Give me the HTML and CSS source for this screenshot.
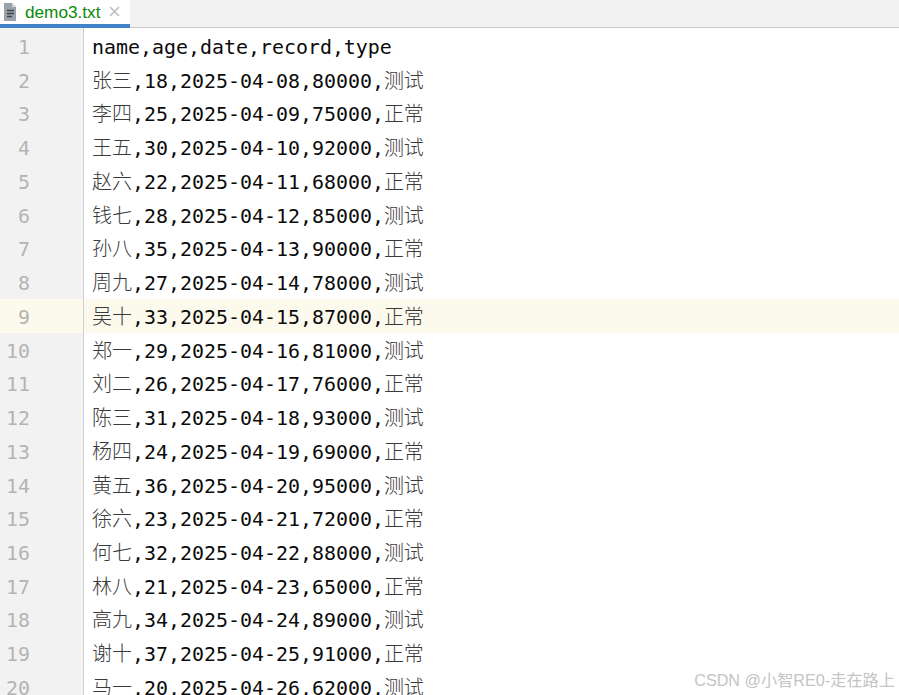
FILE: index.html
```html
<!DOCTYPE html>
<html lang="zh">
<head>
<meta charset="utf-8">
<title>demo3.txt</title>
<link rel="stylesheet" href="styles.css">
</head>
<body>
<div class="tabbar">
  <div class="tab">
    <svg class="file-icon" width="16" height="20" viewBox="0 0 16 20"><path d="M2 1h8l4 4v14H2z" fill="#9aa3ab"/><path d="M10 1l4 4h-4z" fill="#d3d7da"/><path d="M5 8.500h7M5 11.500h7M5 14.500h5" stroke="#3c4347" stroke-width="1.400"/></svg>
    <span class="tab-name">demo3.txt</span>
    <svg class="close-icon" width="11" height="11" viewBox="0 0 11 11"><path d="M1 1l9 9M10 1l-9 9" stroke="#b9bec3" stroke-width="1.500"/></svg>
  </div>
</div>
<div class="editor">
  <div class="gutter">
    <div class="num">1</div><div class="num">2</div><div class="num">3</div><div class="num">4</div><div class="num">5</div><div class="num">6</div><div class="num">7</div><div class="num">8</div><div class="num cur">9</div><div class="num">10</div><div class="num">11</div><div class="num">12</div><div class="num">13</div><div class="num">14</div><div class="num">15</div><div class="num">16</div><div class="num">17</div><div class="num">18</div><div class="num">19</div><div class="num">20</div>
  </div>
  <div class="code">
    <div class="line">name,age,date,record,type</div>
    <div class="line"><span class="zh">张三</span>,18,2025-04-08,80000,<span class="zh">测试</span></div>
    <div class="line"><span class="zh">李四</span>,25,2025-04-09,75000,<span class="zh">正常</span></div>
    <div class="line"><span class="zh">王五</span>,30,2025-04-10,92000,<span class="zh">测试</span></div>
    <div class="line"><span class="zh">赵六</span>,22,2025-04-11,68000,<span class="zh">正常</span></div>
    <div class="line"><span class="zh">钱七</span>,28,2025-04-12,85000,<span class="zh">测试</span></div>
    <div class="line"><span class="zh">孙八</span>,35,2025-04-13,90000,<span class="zh">正常</span></div>
    <div class="line"><span class="zh">周九</span>,27,2025-04-14,78000,<span class="zh">测试</span></div>
    <div class="line cur"><span class="zh">吴十</span>,33,2025-04-15,87000,<span class="zh">正常</span></div>
    <div class="line"><span class="zh">郑一</span>,29,2025-04-16,81000,<span class="zh">测试</span></div>
    <div class="line"><span class="zh">刘二</span>,26,2025-04-17,76000,<span class="zh">正常</span></div>
    <div class="line"><span class="zh">陈三</span>,31,2025-04-18,93000,<span class="zh">测试</span></div>
    <div class="line"><span class="zh">杨四</span>,24,2025-04-19,69000,<span class="zh">正常</span></div>
    <div class="line"><span class="zh">黄五</span>,36,2025-04-20,95000,<span class="zh">测试</span></div>
    <div class="line"><span class="zh">徐六</span>,23,2025-04-21,72000,<span class="zh">正常</span></div>
    <div class="line"><span class="zh">何七</span>,32,2025-04-22,88000,<span class="zh">测试</span></div>
    <div class="line"><span class="zh">林八</span>,21,2025-04-23,65000,<span class="zh">正常</span></div>
    <div class="line"><span class="zh">高九</span>,34,2025-04-24,89000,<span class="zh">测试</span></div>
    <div class="line"><span class="zh">谢十</span>,37,2025-04-25,91000,<span class="zh">正常</span></div>
    <div class="line"><span class="zh">马一</span>,20,2025-04-26,62000,<span class="zh">测试</span></div>
  </div>
  <div class="watermark">CSDN @小智RE0-走在路上</div>
</div>
</body>
</html>
```
FILE: styles.css
```css
html, body {
  margin: 0;
  height: 100%;
  overflow: hidden;
  background: #fff;
}
body {
  display: flex;
  flex-direction: column;
  height: 695px;
}
.tabbar {
  display: flex;
  height: 27px;
  flex: none;
  background: #f2f2f2;
  border-bottom: 1px solid #c9c9c9;
}
.tab {
  box-sizing: border-box;
  width: 130px;
  height: 28px;
  display: flex;
  align-items: flex-start;
  background: #fff;
  border-bottom: 4px solid #4083c9;
  padding-left: 2px;
}
.file-icon {
  margin-top: 2px;
  flex: none;
}
.tab-name {
  margin-left: 7px;
  font: 17.200px/24px "Liberation Sans", Arial, sans-serif;
  color: #0a8a0a;
}
.close-icon {
  margin: 6px 0 0 9px;
  flex: none;
}
.editor {
  position: relative;
  flex: 1;
  display: flex;
  overflow: hidden;
  font: 19.930px/37.800px "DejaVu Sans Mono", "Noto Sans CJK SC", monospace;
}
.gutter {
  box-sizing: border-box;
  width: 84px;
  padding-top: 1px;
  background: #f2f2f2;
  border-right: 1px solid #d0d0d0;
  flex: none;
}
.num {
  height: 33.740px;
  color: #b4b4b4;
  padding-right: 53px;
  text-align: right;
}
.num.cur {
  background: #fcfaed;
}
.code {
  flex: 1;
  padding-top: 1px;
  white-space: nowrap;
  color: #0b0b0b;
}
.line {
  height: 33.740px;
  padding-left: 8px;
}
.line.cur {
  background: #fcfaed;
}
.zh {
  font-family: "Noto Sans CJK SC", sans-serif;
  font-size: 20px;
  line-height: 1;
  color: #3a3a3a;
  font-weight: 300;
}
.watermark {
  position: absolute;
  right: 4px;
  bottom: 5px;
  font: 16.200px/20px "Liberation Sans", "Noto Sans CJK SC", sans-serif;
  color: #c4c4c4;
}
```
